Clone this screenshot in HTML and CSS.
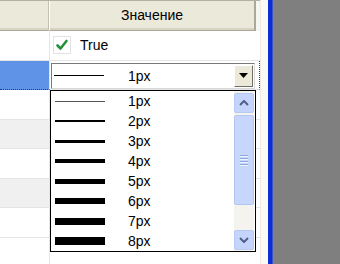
FILE: index.html
```html
<!DOCTYPE html>
<html lang="ru">
<head>
  <meta charset="UTF-8">
  <title>Свойства</title>
  <link rel="stylesheet" href="styles.css">
</head>
<body>
  <div class="window">
    <div class="grid">
      <div class="head">
        <div class="head-cell name"></div>
        <div class="head-cell value">Значение</div>
      </div>
      <div class="row">
        <div class="cell name"></div>
        <div class="cell value">
          <span class="check">
            <svg width="14" height="14" viewBox="0 0 14 14"><path d="M2.5 7.5 L5.5 10.5 L11.5 3" fill="none" stroke="#22923a" stroke-width="2.6" stroke-linecap="round" stroke-linejoin="round"/></svg>
          </span>
          <span class="cell-text">True</span>
        </div>
      </div>
      <div class="row selected">
        <div class="cell name"></div>
        <div class="cell value">
          <div class="combo">
            <span class="sample" style="height:1px"></span>
            <span class="combo-text">1px</span>
            <span class="combo-btn">
              <svg width="9" height="5" viewBox="0 0 9 5"><path d="M0 0 H9 L4.5 5 Z" fill="#000"/></svg>
            </span>
          </div>
        </div>
      </div>
      <div class="row"><div class="cell name"></div><div class="cell value"></div></div>
      <div class="row alt"><div class="cell name"></div><div class="cell value"></div></div>
      <div class="row"><div class="cell name"></div><div class="cell value"></div></div>
      <div class="row alt"><div class="cell name"></div><div class="cell value"></div></div>
      <div class="row"><div class="cell name"></div><div class="cell value"></div></div>
      <div class="row last"><div class="cell name"></div><div class="cell value"></div></div>

      <!-- открытый список толщины линии -->
      <div class="list">
        <div class="items">
          <div class="item"><span class="sample thin" style="height:1px"></span><span>1px</span></div>
          <div class="item"><span class="sample" style="height:2px"></span><span>2px</span></div>
          <div class="item"><span class="sample" style="height:3px"></span><span>3px</span></div>
          <div class="item"><span class="sample" style="height:4px"></span><span>4px</span></div>
          <div class="item"><span class="sample" style="height:5px"></span><span>5px</span></div>
          <div class="item"><span class="sample" style="height:6px"></span><span>6px</span></div>
          <div class="item"><span class="sample" style="height:7px"></span><span>7px</span></div>
          <div class="item"><span class="sample" style="height:8px"></span><span>8px</span></div>
        </div>
        <div class="scroll">
          <div class="sb-btn">
            <svg width="10" height="6" viewBox="0 0 10 6"><path d="M1 5 L5 1 L9 5" fill="none" stroke="#4d6185" stroke-width="2"/></svg>
          </div>
          <div class="sb-thumb">
            <span class="grip"></span><span class="grip"></span><span class="grip"></span><span class="grip"></span>
          </div>
          <div class="sb-track"></div>
          <div class="sb-btn">
            <svg width="10" height="6" viewBox="0 0 10 6"><path d="M1 1 L5 5 L9 1" fill="none" stroke="#4d6185" stroke-width="2"/></svg>
          </div>
        </div>
      </div>
    </div>
    <div class="gutter"></div>
    <div class="edge"></div>
    <div class="desk"></div>
  </div>
</body>
</html>
```

FILE: styles.css
```css
body {
  margin: 0;
  background-color: #808080;
  font-family: "Liberation Sans", Arial, sans-serif;
  font-size: 14px;
  color: #000;
}
.window {
  display: flex;
  height: 264px;
  overflow: hidden;
}
.grid {
  width: 260px;
  background-color: #fff;
  position: relative;
  display: flex;
  flex-direction: column;
}
.gutter {
  width: 7px;
  background-color: #faf9f4;
  border-left: 1px solid #ebeae3;
}
.edge {
  width: 4px;
  background-color: #0b2fd4;
  border-right: 1px solid #3a57c8;
}
.desk {
  flex: 1;
  background-color: #7f7f7f;
}
.head {
  display: flex;
  height: 31px;
  box-sizing: border-box;
  background-color: #f6f5ef;
  border-top: 1px solid #b2b0a2;
}
.head-cell {
  background-color: #ebe9d9;
  border-bottom: 1px solid #aca899;
  box-shadow: inset 0 -2px 0 #d8d4c4;
}
.head-cell.name {
  width: 48px;
  border-right: 1px solid #c4c1b0;
}
.head-cell.value {
  width: 204px;
  border-left: 1px solid #fff;
  border-right: 2px solid #aca899;
  text-align: center;
  line-height: 28px;
}
.row {
  display: flex;
  height: 29.5px;
  box-sizing: border-box;
  border-bottom: 1px solid #e4e4e4;
}
.row.last {
  flex: 1;
  border-bottom: none;
}
.cell.name {
  width: 49px;
  border-right: 1px solid #e6e6e6;
}
.cell.value {
  flex: 1;
  display: flex;
  align-items: center;
}
.row.alt .cell.name {
  background-color: #f0f0f0;
}
.row.selected {
  border-right: 1px dotted #444;
}
.row.selected .cell.name {
  background-color: #5f93e8;
  border-bottom: 1px dotted #1d3b82;
  margin-bottom: -1px;
}
.row.selected .cell.value {
  align-items: flex-start;
}
.check {
  width: 16px;
  height: 16px;
  margin-left: 3px;
  display: inline-flex;
  align-items: center;
  justify-content: center;
  border: 1px solid #e3e3e3;
}
.cell-text {
  margin-left: 9px;
}
.combo {
  display: flex;
  align-items: center;
  width: 204px;
  height: 26px;
  margin: 2px 0 0 1px;
  box-sizing: border-box;
  border: 1px solid #7a7a7a;
  border-bottom-color: #d8d8d8;
  border-right-color: #d8d8d8;
  background-color: #fff;
}
.sample {
  width: 50px;
  background-color: #000;
  flex: 0 0 auto;
}
.sample.thin {
  background-color: #555;
}
.combo .sample {
  margin-left: 2px;
}
.combo-text {
  margin-left: 24px;
  flex: 1;
}
.combo-btn {
  width: 19px;
  height: 22px;
  margin-right: 1px;
  box-sizing: border-box;
  display: flex;
  align-items: center;
  justify-content: center;
  background-color: #ece9d8;
  border: 1px solid;
  border-color: #fff #716f64 #716f64 #fff;
}
.list {
  position: absolute;
  left: 50px;
  top: 90px;
  width: 206px;
  height: 162px;
  box-sizing: border-box;
  border: 1px solid #000;
  background-color: #fff;
  display: flex;
}
.items {
  flex: 1;
}
.item {
  height: 20px;
  display: flex;
  align-items: center;
  padding-left: 4px;
}
.item span:last-child {
  margin-left: 23px;
}
.scroll {
  width: 20px;
  margin-right: 1px;
  display: flex;
  flex-direction: column;
  padding: 2px 0 1px;
  background-color: #f4f3ee;
}
.sb-btn {
  height: 20px;
  box-sizing: border-box;
  border: 1px solid #b7c9f3;
  border-radius: 2px;
  background-color: #c4d4fc;
  display: flex;
  align-items: center;
  justify-content: center;
}
.sb-thumb {
  height: 90px;
  margin-top: 2px;
  box-sizing: border-box;
  border: 1px solid #b2c6f4;
  border-radius: 2px;
  background-color: #c6d6fc;
  display: flex;
  flex-direction: column;
  align-items: center;
  justify-content: center;
  gap: 1px;
}
.grip {
  width: 8px;
  height: 1px;
  background-color: #8ea8e2;
  border-bottom: 1px solid #eef3ff;
}
.sb-track {
  flex: 1;
}
```
